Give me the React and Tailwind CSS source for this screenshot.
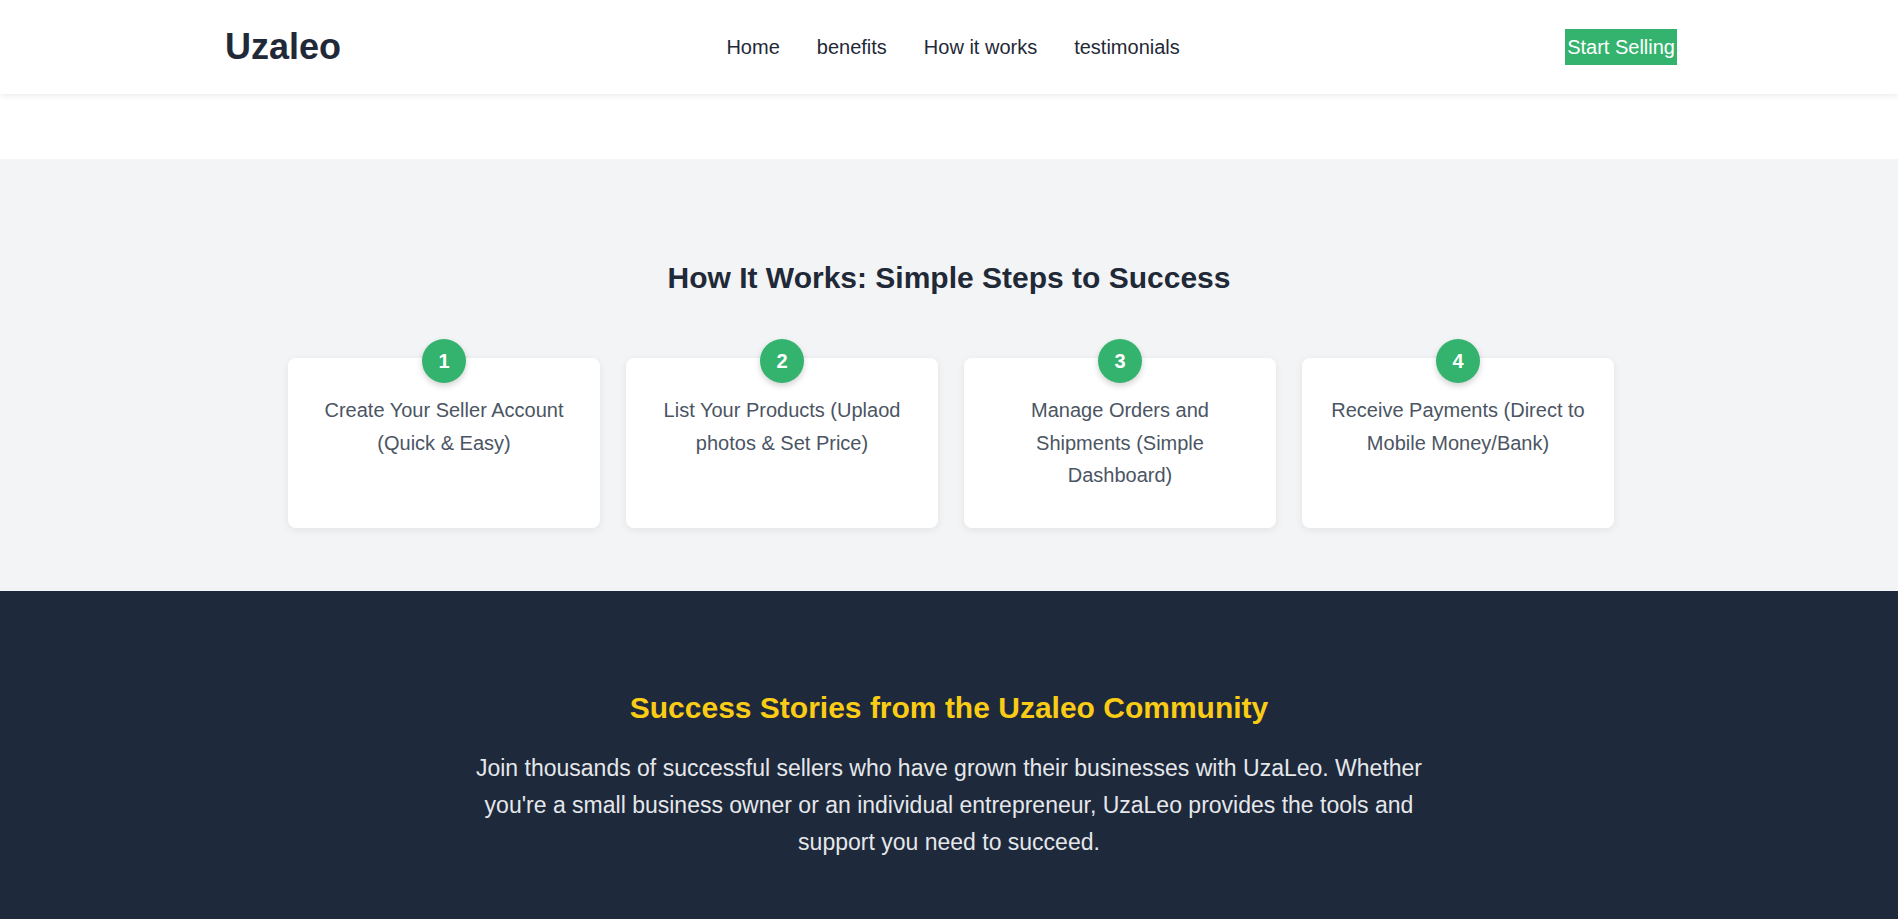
import React from "react";

const steps = [
  "Create Your Seller Account (Quick & Easy)",
  "List Your Products (Uplaod photos & Set Price)",
  "Manage Orders and Shipments (Simple Dashboard)",
  "Receive Payments (Direct to Mobile Money/Bank)",
];

export default function App() {
  return (
    <div className="min-h-screen bg-white font-['Liberation_Sans',Arial,sans-serif]">
      <header className="relative z-10 h-[94px] bg-white shadow-[0_2px_6px_rgba(0,0,0,0.08)]">
        <div className="flex h-full items-center justify-between pr-[221px] pl-[225px]">
          <div className="text-4xl font-bold text-[#1f2937]">Uzaleo</div>
          <nav className="flex items-center gap-[37px] text-xl text-[#1f2937]">
            <a href="#">Home</a>
            <a href="#">benefits</a>
            <a href="#">How it works</a>
            <a href="#">testimonials</a>
          </nav>
          <button className="flex h-9 items-center bg-[#34b36e] px-0.5 text-xl text-white">
            Start Selling
          </button>
        </div>
      </header>
      <div className="h-[65px] bg-white"></div>

      <section className="bg-[#f3f4f6] pt-[101px] pb-[63px]">
        <h2 className="mb-[62px] text-center text-3xl leading-9 font-bold text-[#1f2937]">
          How It Works: Simple Steps to Success
        </h2>
        <div className="grid grid-cols-4 gap-[26px] pr-[284px] pl-[288px]">
          {steps.map((s, i) => (
            <div
              key={i}
              className="relative rounded-lg bg-white px-6 pt-9 pb-9 text-center text-xl leading-relaxed text-[#4b5563] shadow-[0_2px_8px_rgba(0,0,0,0.07)]"
            >
              <div className="absolute -top-[19px] left-1/2 flex h-11 w-11 -translate-x-1/2 items-center justify-center rounded-full bg-[#34b36e] text-xl font-bold text-white shadow-[0_3px_6px_rgba(0,0,0,0.18)]">
                {i + 1}
              </div>
              <p>{s}</p>
            </div>
          ))}
        </div>
      </section>

      <section className="bg-[#1e293b] pt-[99px] pb-24">
        <h2 className="mb-6 text-center text-3xl leading-9 font-bold text-[#facc15]">
          Success Stories from the Uzaleo Community
        </h2>
        <p className="mx-auto max-w-[980px] text-center text-[23px] leading-relaxed text-[#e5e7eb]">
          Join thousands of successful sellers who have grown their businesses with UzaLeo. Whether
          you're a small business owner or an individual entrepreneur, UzaLeo provides the tools
          and support you need to succeed.
        </p>
      </section>
    </div>
  );
}
